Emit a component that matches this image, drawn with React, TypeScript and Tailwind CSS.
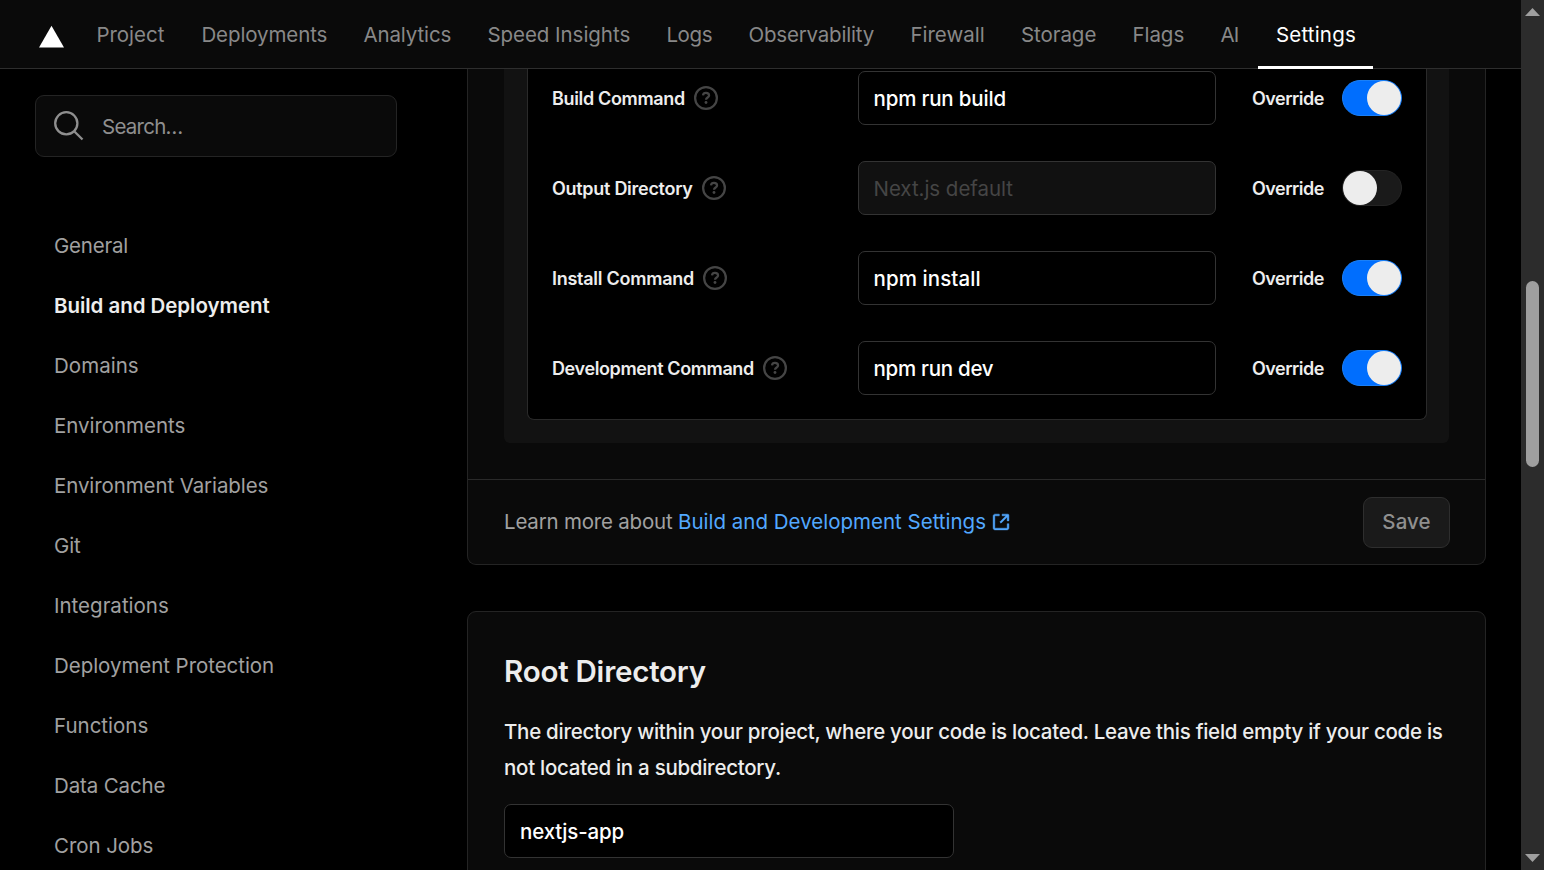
import React from "react";

const tabs = [
  { label: "Project", box: "w-[105px]", track: "tracking-[-0.02px]" },
  { label: "Deployments", box: "w-[162px]", track: "tracking-[-0.1px]" },
  { label: "Analytics", box: "w-[124px]", track: "tracking-[-0.12px]" },
  { label: "Speed Insights", box: "w-[179px]", track: "tracking-[-0.04px]" },
  { label: "Logs", box: "w-[82px]", track: "tracking-[-0.4px]" },
  { label: "Observability", box: "w-[162px]", track: "tracking-[-0.18px]" },
  { label: "Firewall", box: "w-[110.5px]", track: "tracking-[0px]" },
  { label: "Storage", box: "w-[111.5px]", track: "tracking-[-0.04px]" },
  { label: "Flags", box: "w-[88px]", track: "tracking-[-0.04px]" },
  { label: "AI", box: "w-[55.5px]", track: "tracking-[-0.9px]" },
  { label: "Settings", box: "w-[115.5px]", track: "tracking-[0.2px]", active: true },
];

const links = [
  { label: "General", track: "tracking-[-0.2px]" },
  { label: "Build and Deployment", track: "tracking-[-0.05px]", active: true },
  { label: "Domains", track: "tracking-[0.03px]" },
  { label: "Environments", track: "tracking-[-0.04px]" },
  { label: "Environment Variables", track: "tracking-[-0.1px]" },
  { label: "Git", track: "tracking-[-0.13px]" },
  { label: "Integrations", track: "tracking-[0px]" },
  { label: "Deployment Protection", track: "tracking-[-0.05px]" },
  { label: "Functions", track: "tracking-[0px]" },
  { label: "Data Cache", track: "tracking-[-0.13px]" },
  { label: "Cron Jobs", track: "tracking-[-0.07px]" },
];

const commands = [
  { label: "Build Command", track: "tracking-[-0.34px]", value: "npm run build", valueTrack: "tracking-[-0.18px]", on: true },
  { label: "Output Directory", track: "tracking-[-0.28px]", value: "Next.js default", valueTrack: "tracking-[-0.04px]", on: false },
  { label: "Install Command", track: "tracking-[-0.26px]", value: "npm install", valueTrack: "tracking-[0.08px]", on: true },
  { label: "Development Command", track: "tracking-[-0.38px]", value: "npm run dev", valueTrack: "tracking-[-0.27px]", on: true },
];

function HelpIcon() {
  return (
    <svg className="size-6 shrink-0 text-[#454545]" viewBox="0 0 16 16" fill="none" stroke="currentColor" strokeWidth="1.5">
      <circle cx="8" cy="8" r="7.25" />
      <path d="M6 6.2C6.1 5.2 6.9 4.55 8 4.55c1.2 0 2.05.7 2.05 1.75C10.05 7.7 8 7.6 8 9.2" />
      <circle cx="8" cy="11" r="0.95" fill="currentColor" stroke="none" />
    </svg>
  );
}

function ExternalIcon() {
  return (
    <svg className="size-[18px] shrink-0" viewBox="0 0 16 16" fill="currentColor" stroke="currentColor" strokeWidth="0.4">
      <path
        fillRule="evenodd"
        d="M13.5 10.25V13.25C13.5 13.39 13.39 13.5 13.25 13.5H2.75C2.61 13.5 2.5 13.39 2.5 13.25V2.75C2.5 2.61 2.61 2.5 2.75 2.5H6.5V1H2.75C1.78 1 1 1.78 1 2.75V13.25C1 14.22 1.78 15 2.75 15H13.25C14.22 15 15 14.22 15 13.25V9.5H13.5V10.25ZM9 1H14.25C14.66 1 15 1.34 15 1.75V7H13.5V3.56L8 9.06L6.94 8L12.44 2.5H9V1Z"
      />
    </svg>
  );
}

function Toggle({ on }: { on: boolean }) {
  return (
    <span
      className={`flex h-9 w-[60px] shrink-0 items-center rounded-full border ${
        on ? "justify-end border-[#1a80f8] bg-[#006efe]" : "justify-start border-[#242424] bg-[#1a1a1a]"
      }`}
    >
      <span className={`size-[33.5px] rounded-full bg-[#ededed] ${on ? "mr-[0.5px]" : ""}`} />
    </span>
  );
}

function Header() {
  return (
    <header className="flex h-[69px] shrink-0 border-b border-[#2e2e2e] bg-[#0a0a0a] pl-[39px]">
      <svg className="mt-[25px] h-[23px] w-[25px] shrink-0" viewBox="0 0 25 23">
        <path d="M12.5 0.8L25 22.5H0z" fill="#fff" />
      </svg>
      <nav className="-mb-px ml-[14.4px] flex">
        {tabs.map((t) => (
          <a
            key={t.label}
            className={`flex h-[69px] shrink-0 flex-col items-start whitespace-nowrap pt-[20px] pl-[18px] leading-[30px] ${t.box} ${t.track} ${
              t.active ? "border-b-[3px] border-white font-[430] text-white" : "text-[#888888]"
            }`}
          >
            {t.label}
          </a>
        ))}
      </nav>
    </header>
  );
}

function Sidebar() {
  return (
    <aside className="w-[467px] shrink-0 pl-[35px] pt-[26px]">
      <div className="flex h-[62px] w-[362px] items-center rounded-[9px] border border-[#242424] bg-[#0a0a0a] pl-[18px]">
        <svg className="size-[30px] shrink-0 text-[#8f8f8f]" viewBox="0 0 30 30" fill="none" stroke="currentColor" strokeWidth="2.3">
          <circle cx="12.3" cy="12.3" r="11.1" />
          <path d="M20.2 20.2l8.3 8.3" />
        </svg>
        <span className="ml-[18px] mt-[2px] tracking-[-0.75px] text-[#8f8f8f]">Search…</span>
      </div>
      <ul className="mt-[59px] pl-[19px]">
        {links.map((l) => (
          <li
            key={l.label}
            className={`flex h-[60px] items-center whitespace-nowrap ${l.track} ${
              l.active ? "font-semibold text-[#ededed]" : "text-[#a1a1a1]"
            }`}
          >
            {l.label}
          </li>
        ))}
      </ul>
    </aside>
  );
}

function BuildCard() {
  return (
    <section className="h-[496px] rounded-b-[9px] border-x border-b border-[#242424] bg-[#0a0a0a]">
      <div className="h-[410px] px-[36px]">
        <div className="h-[374px] rounded-b-[6px] bg-[#121212] pl-[23px] pr-[22px]">
          <div className="flex h-[351px] flex-col gap-[36px] rounded-b-[7px] border-x border-b border-[#2a2a2a] bg-black px-[24px] pt-[2px]">
            {commands.map((c) => (
              <div key={c.label} className="flex h-[54px] items-center text-[18px]">
                <div className="flex w-[306px] items-center gap-[9px]">
                  <span className={`pt-px font-semibold text-[#ededed] ${c.track}`}>{c.label}</span>
                  <HelpIcon />
                </div>
                <div
                  className={`flex h-[54px] w-[358px] items-center rounded-[7px] border border-[#333333] pl-[14.5px] pt-px text-[20.5px] ${c.valueTrack} ${
                    c.on ? "bg-black font-[450] text-white" : "bg-[#111111] text-[#454545]"
                  }`}
                >
                  {c.value}
                </div>
                <div className="flex flex-1 items-center justify-between pl-[36px]">
                  <span className="pt-px font-semibold tracking-[-0.52px] text-[#ededed]">Override</span>
                  <Toggle on={c.on} />
                </div>
              </div>
            ))}
          </div>
        </div>
      </div>
      <footer className="flex h-[85px] items-center justify-between border-t border-[#2a2a2a] pl-[36px] pr-[35px]">
        <p className="flex items-center whitespace-pre tracking-[-0.2px] text-[#a1a1a1]">
          Learn more about{" "}
          <a className="flex items-center gap-[6px] tracking-[0px] text-[#52a8ff]">
            Build and Development Settings
            <ExternalIcon />
          </a>
        </p>
        <button className="flex h-[51px] w-[87px] items-center justify-center rounded-[9px] border border-[#2e2e2e] bg-[#1a1a1a] font-medium tracking-[0.1px] text-[#8f8f8f]">
          Save
        </button>
      </footer>
    </section>
  );
}

function RootCard() {
  return (
    <section className="mt-[46px] h-[340px] rounded-[9px] border border-[#242424] bg-[#0a0a0a] px-[36px] pt-[40px]">
      <h2 className="text-[29.5px] font-semibold leading-[38px] tracking-[-0.22px] text-[#ededed]">Root Directory</h2>
      <p className="mt-[24px] whitespace-nowrap font-[450] leading-[36px] tracking-[-0.28px] text-[#ededed]">
        The directory within your project, where your code is located. Leave this field empty if your code is
        <br />
        not located in a subdirectory.
      </p>
      <div className="mt-[18px] flex h-[54px] w-[450px] items-center rounded-[7px] border border-[#333333] bg-black pl-[15px] pt-px font-[450] tracking-[-0.15px] text-white">
        nextjs-app
      </div>
    </section>
  );
}

function Scrollbar() {
  return (
    <div className="flex w-[23px] shrink-0 flex-col items-center bg-[#2c2c2c] py-[8px]">
      <svg className="h-[8px] w-[15px] shrink-0" viewBox="0 0 15 8">
        <path d="M7.5 0L15 8H0z" fill="#9f9f9f" />
      </svg>
      <div className="mt-[265px] h-[186px] w-[13px] shrink-0 rounded-full bg-[#9f9f9f]" />
      <svg className="mt-auto h-[8px] w-[15px] shrink-0" viewBox="0 0 15 8">
        <path d="M7.5 8L15 0H0z" fill="#9f9f9f" />
      </svg>
    </div>
  );
}

export default function App() {
  return (
    <div className="flex h-[870px] w-[1544px] overflow-hidden bg-black font-['Inter',sans-serif] text-[20.5px] leading-[30px]">
      <div className="flex w-[1521px] shrink-0 flex-col">
        <Header />
        <div className="flex h-[801px] overflow-hidden">
          <Sidebar />
          <main className="w-[1019px] shrink-0">
            <BuildCard />
            <RootCard />
          </main>
        </div>
      </div>
      <Scrollbar />
    </div>
  );
}
